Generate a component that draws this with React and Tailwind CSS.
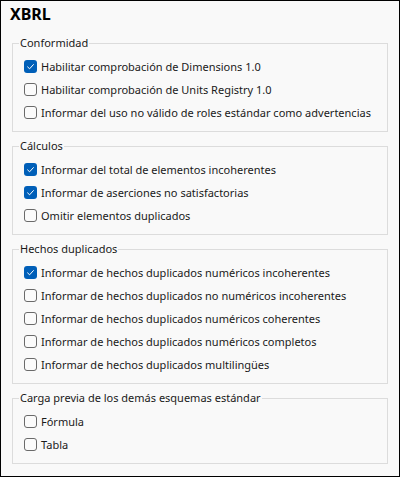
import React from "react";

const groups = [
  {
    title: "Conformidad",
    items: [
      ["Habilitar comprobación de Dimensions 1.0", true],
      ["Habilitar comprobación de Units Registry 1.0", false],
      ["Informar del uso no válido de roles estándar como advertencias", false],
    ],
  },
  {
    title: "Cálculos",
    items: [
      ["Informar del total de elementos incoherentes", true],
      ["Informar de aserciones no satisfactorias", true],
      ["Omitir elementos duplicados", false],
    ],
  },
  {
    title: "Hechos duplicados",
    items: [
      ["Informar de hechos duplicados numéricos incoherentes", true],
      ["Informar de hechos duplicados no numéricos incoherentes", false],
      ["Informar de hechos duplicados numéricos coherentes", false],
      ["Informar de hechos duplicados numéricos completos", false],
      ["Informar de hechos duplicados multilingües", false],
    ],
  },
  {
    title: "Carga previa de los demás esquemas estándar",
    items: [
      ["Fórmula", false],
      ["Tabla", false],
    ],
  },
];

function Box({ checked }) {
  if (checked) {
    return (
      <span className="flex h-[13px] w-[13px] shrink-0 items-center justify-center rounded-[3px] bg-[#005fb8]">
        <svg width="13" height="13" viewBox="0 0 13 13">
          <path d="M3.6 6.9 L5.6 8.8 L9.4 4.6" fill="none" stroke="#ffffff" strokeWidth="1" strokeLinecap="round" strokeLinejoin="round" />
        </svg>
      </span>
    );
  }
  return <span className="h-[13px] w-[13px] shrink-0 rounded-[3px] border border-[#6a6a6a] bg-[#fbfbfb]" />;
}

export default function App() {
  return (
    <div
      className="box-border h-[477px] w-[400px] border border-black bg-[#f9f9f9] pl-[11px] pr-[11px] pt-[2px] text-[#1a1a1a]"
      style={{ fontFamily: '"Noto Sans", sans-serif' }}
    >
      <div className="pl-[-1px] text-[16px] font-bold leading-[22px] text-black">
        <span className="ml-[-2px]">XBRL</span>
      </div>
      <div className="mt-[10px] flex flex-col gap-[6px]">
        {groups.map((g) => (
          <fieldset key={g.title} className="m-0 border border-[#dcdcdc] px-[6px] pb-[7px] pt-[4px]">
            <legend className="px-[1px] text-[11px] leading-[16px]">{g.title}</legend>
            <div className="flex flex-col pl-[5px]">
              {g.items.map(([label, checked]) => (
                <div key={label} className="flex h-[23px] items-center gap-[4px] text-[11px] leading-[16px]">
                  <Box checked={checked} />
                  <span className="whitespace-nowrap">{label}</span>
                </div>
              ))}
            </div>
          </fieldset>
        ))}
      </div>
    </div>
  );
}
